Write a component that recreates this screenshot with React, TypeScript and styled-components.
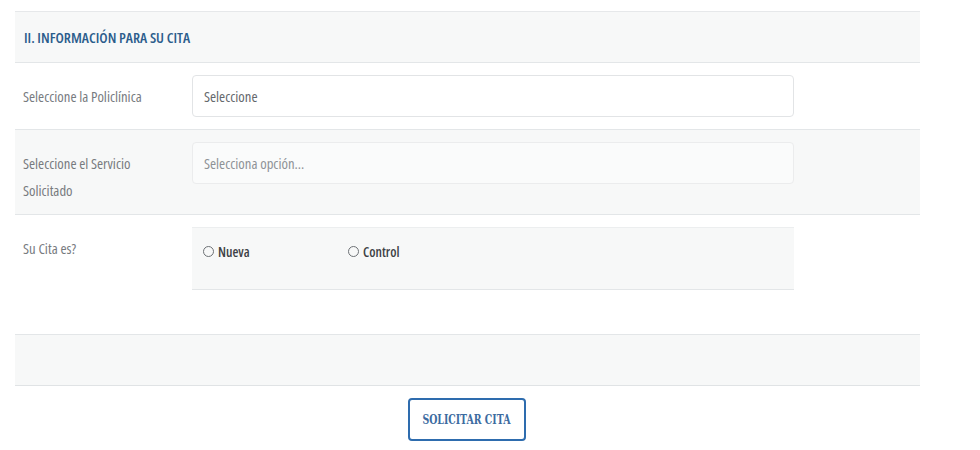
import styled, { createGlobalStyle } from "styled-components";

const GlobalStyle = createGlobalStyle`
  body {
    margin: 0;
    background: #ffffff;
    font-family: "Open Sans", "Liberation Sans", sans-serif;
    font-stretch: 75%;
  }
`;

// --------------------- LAYOUT ---------------------------------

const Page = styled.div`
  width: 980px;
  height: 450px;
  padding: 11px 60px 0 15px;
  box-sizing: border-box;
`;

const Panel = styled.div`
  border-top: 1px solid #e6e8ea;
`;

const HeaderRow = styled.div`
  height: 50px;
  background: #f7f8f8;
  border-bottom: 1px solid #e3e6e8;
  display: flex;
  align-items: center;
  padding-left: 9px;
  font-size: 14.7px;
  font-weight: 600;
  color: #2c5d8c;
`;

const Row = styled.div<{ $shaded?: boolean; $height: number; $last?: boolean }>`
  display: flex;
  align-items: flex-start;
  height: ${({ $height }) => $height}px;
  background: ${({ $shaded }) => ($shaded ? "#f7f8f8" : "#ffffff")};
  border-bottom: ${({ $last }) => ($last ? "none" : "1px solid #e3e6e8")};
  padding-top: 12px;
  box-sizing: border-box;
`;

const Label = styled.div`
  width: 177px;
  padding-left: 8px;
  padding-top: 8px;
  box-sizing: border-box;
  font-size: 14.7px;
  line-height: 27px;
  color: #777b7f;
`;

const Field = styled.div<{ $muted?: boolean }>`
  width: 602px;
  height: 42px;
  box-sizing: border-box;
  border: 1px solid ${({ $muted }) => ($muted ? "#ebeced" : "#e2e4e6")};
  border-radius: 4px;
  background: ${({ $muted }) => ($muted ? "#fafbfb" : "#ffffff")};
  display: flex;
  align-items: center;
  padding-left: 11px;
  font-size: 14.7px;
  color: ${({ $muted }) => ($muted ? "#8e9296" : "#64686c")};
`;

const RadioBox = styled.div`
  width: 602px;
  height: 63px;
  box-sizing: border-box;
  background: #f7f8f8;
  border-top: 1px solid #eceeef;
  border-bottom: 1px solid #e3e6e8;
  display: flex;
  align-items: flex-start;
  padding: 15px 0 0 11px;
`;

const RadioOption = styled.label`
  width: 145px;
  display: flex;
  align-items: center;
  gap: 4px;
  font-size: 13.5px;
  font-weight: 600;
  line-height: 18px;
  color: #3d4145;
`;

const RadioCircle = styled.span`
  width: 9px;
  height: 9px;
  border: 1px solid #6d7175;
  border-radius: 50%;
  margin-top: -2px;
`;

const Spacer = styled.div`
  height: 43px;
  border-bottom: 1px solid #e3e6e8;
`;

const FooterBand = styled.div`
  height: 50px;
  background: #f7f8f8;
  border-bottom: 1px solid #e0e3e5;
`;

const Actions = styled.div`
  display: flex;
  justify-content: center;
  padding: 12px 2px 0 0;
`;

const SubmitButton = styled.button`
  width: 118px;
  height: 43px;
  border: 2px solid #2e6cae;
  border-radius: 4px;
  background: #ffffff;
  padding: 0;
  display: flex;
  align-items: center;
  justify-content: center;
`;

const ButtonText = styled.span`
  display: inline-block;
  transform: scaleX(0.78);
  white-space: nowrap;
  color: #3c6ba0;
  font-family: "DejaVu Serif", "Liberation Serif", serif;
  font-weight: 700;
  font-size: 12px;
`;

export default function App() {
  return (
    <Page>
      <GlobalStyle />
      <Panel>
        <HeaderRow>II. INFORMACIÓN PARA SU CITA</HeaderRow>
        <Row $height={67}>
          <Label>Seleccione la Policlínica</Label>
          <Field>Seleccione</Field>
        </Row>
        <Row $height={85} $shaded>
          <Label>
            Seleccione el Servicio
            <br />
            Solicitado
          </Label>
          <Field $muted>Selecciona opción...</Field>
        </Row>
        <Row $height={76} $last>
          <Label>Su Cita es?</Label>
          <RadioBox>
            <RadioOption>
              <RadioCircle />
              Nueva
            </RadioOption>
            <RadioOption>
              <RadioCircle />
              Control
            </RadioOption>
          </RadioBox>
        </Row>
        <Spacer />
        <FooterBand />
      </Panel>
      <Actions>
        <SubmitButton>
          <ButtonText>SOLICITAR CITA</ButtonText>
        </SubmitButton>
      </Actions>
    </Page>
  );
}
